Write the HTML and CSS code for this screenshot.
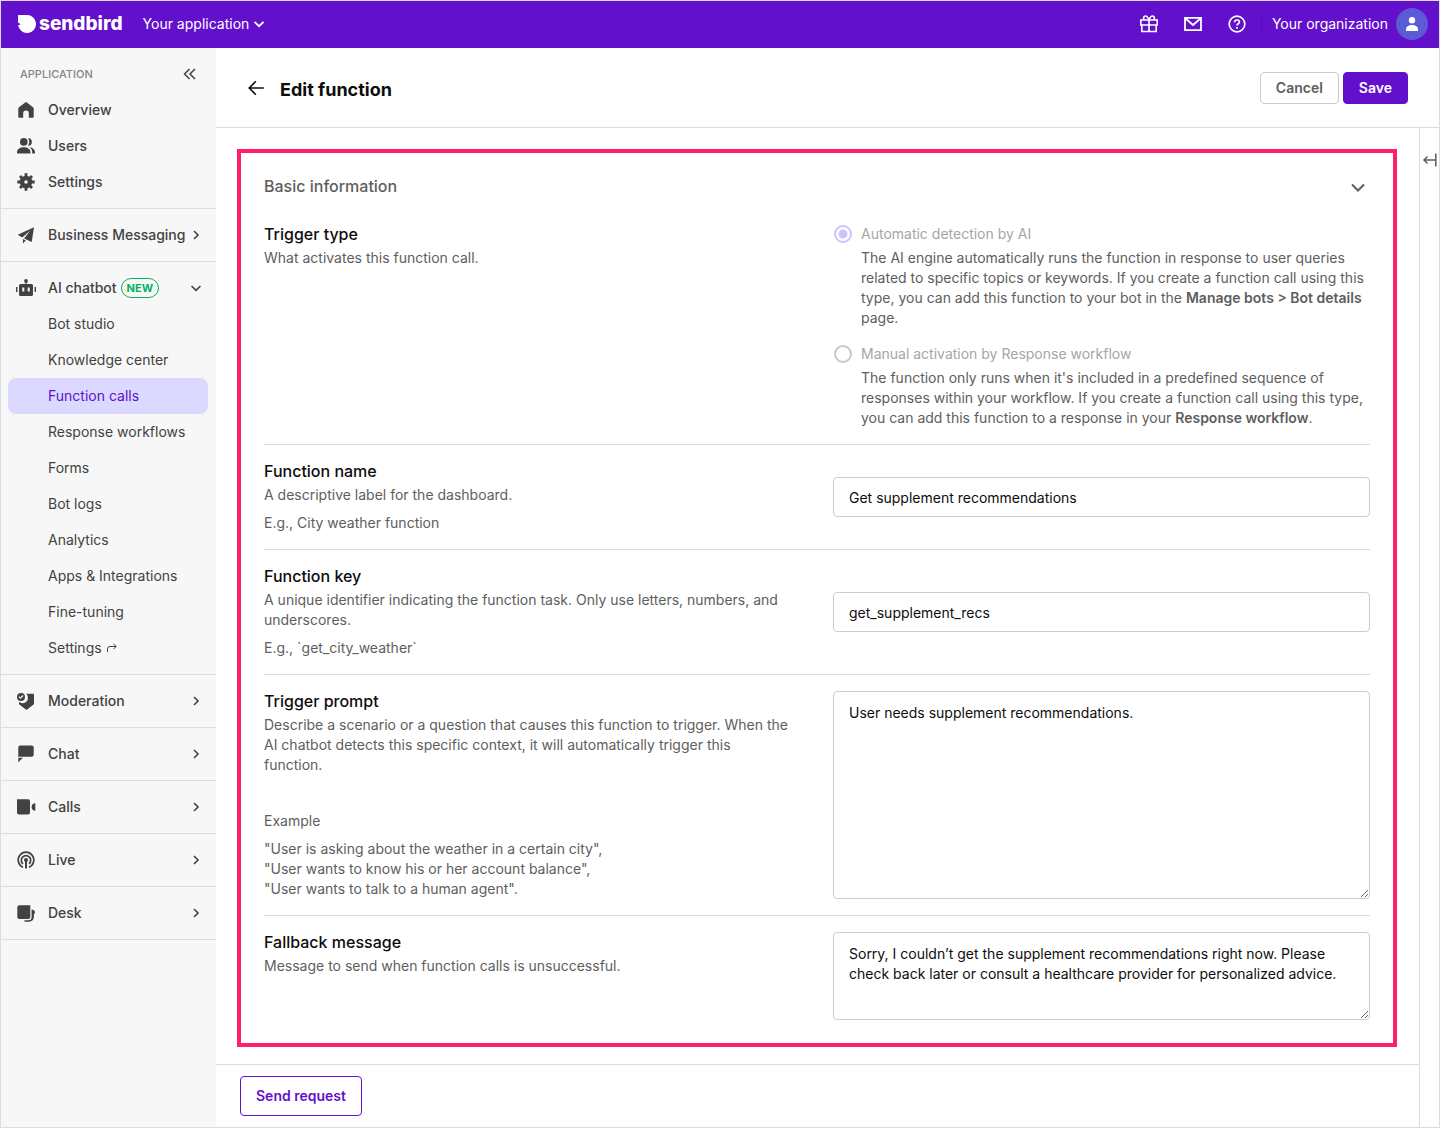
FILE: index.html
```html
<!doctype html>
<html lang="en">
<head>
<meta charset="utf-8" />
<title>Edit function | Sendbird Dashboard</title>
<meta name="viewport" content="width=device-width, initial-scale=1" />
<link rel="stylesheet" href="styles.css">
</head>
<body>
<!-- shared icons -->
<svg class="sprite" aria-hidden="true">
  <symbol id="chev-right" viewBox="0 0 16 16"><path d="M6 4l4 4-4 4" fill="none" stroke="currentColor" stroke-width="1.6"/></symbol>
  <symbol id="chev-down" viewBox="0 0 16 16"><path d="M3.5 6L8 10.4 12.5 6" fill="none" stroke="currentColor" stroke-width="1.6"/></symbol>
</svg>

<div class="app">
  <header class="topbar">
    <a class="logo" href="#">
      <svg width="18" height="18" viewBox="0 0 18 18" aria-hidden="true"><path fill="#fff" d="M0 0H9a9 9 0 1 1-8.9 10.3L2.8 9.2 0 7.4z"/></svg>
      <span>sendbird</span>
    </a>
    <button class="top-btn app-switch" type="button">Your application
      <svg width="16" height="16" viewBox="0 0 16 16" aria-hidden="true"><path d="M3.5 5.8L8 10.2l4.5-4.4" fill="none" stroke="currentColor" stroke-width="1.8"/></svg>
    </button>
    <div class="top-right">
      <button class="top-icon" type="button" aria-label="What's new">
        <svg width="20" height="20" viewBox="0 0 20 20" fill="none" stroke="currentColor" stroke-width="1.6"><path d="M1.8 6h16.4v5H1.8zM2.8 11v6.5h14.4V11M10 6v11.5M10 6C9 3 7.5 1.6 5.8 2.2 4 3 4.5 5 5.2 6M10 6c1-3 2.5-4.4 4.2-3.8C16 3 15.5 5 14.8 6"/></svg>
      </button>
      <button class="top-icon" type="button" aria-label="Messages">
        <svg width="20" height="20" viewBox="0 0 20 20" fill="none" stroke="currentColor" stroke-width="1.8"><path d="M2 3.9h16v12.2H2zM2.5 4.5L10 11l7.5-6.5"/></svg>
      </button>
      <button class="top-icon" type="button" aria-label="Help">
        <svg width="20" height="20" viewBox="0 0 20 20" fill="none" stroke="currentColor" stroke-width="1.7"><circle cx="10" cy="10" r="7.8"/><path d="M7.6 8.3c0-1.5 1-2.3 2.4-2.3s2.4.9 2.4 2.1c0 1.7-2.4 1.7-2.4 3.5M10 13v1.7"/></svg>
      </button>
      <button class="top-btn org" type="button">Your organization
        <span class="avatar"><svg width="16" height="16" viewBox="0 0 16 16" fill="#fff" aria-hidden="true"><circle cx="8" cy="4.2" r="3.2"/><path d="M2 15v-1.5C2 10.7 4.5 9 8 9s6 1.7 6 4.5V15z"/></svg></span>
      </button>
    </div>
  </header>

  <div class="layout">
    <nav class="sidebar" aria-label="Application">
      <div class="side-head">
        <span>APPLICATION</span>
        <button class="collapse" type="button" aria-label="Collapse menu">
          <svg width="16" height="16" viewBox="0 0 16 16" fill="none" stroke="currentColor" stroke-width="1.5"><path d="M7.5 3l-5 5 5 5M13 3L8 8l5 5"/></svg>
        </button>
      </div>

      <div class="side-group first">
        <a class="side-item" href="#">
          <svg class="ico" viewBox="0 0 20 20"><path d="M9.2 2.4a1.2 1.2 0 0 1 1.6 0l6.2 4.8q.7.6.7 1.4v8.2q0 .9-.9.9h-4v-4.5a2.8 2.8 0 0 0-5.6 0v4.5h-4q-.9 0-.9-.9V8.6q0-.8.7-1.4z"/></svg>
          Overview
        </a>
        <a class="side-item" href="#">
          <svg class="ico" viewBox="0 0 20 20"><circle cx="7.8" cy="5.9" r="3.8"/><path d="M1 17.6v-1.4c0-3 2.9-5 6.8-5s6.7 2 6.7 5v1.4zM12 2.2c2.2-.4 3.9 1.4 3.9 3.7s-1.7 4.1-3.9 3.7c1.7-2.2 1.7-5.2 0-7.4zM13.5 11.2c3.3.3 5.5 2.3 5.5 5.2v1.2h-2.8v-1.4c0-2.2-1-3.9-2.7-5z"/></svg>
          Users
        </a>
        <a class="side-item" href="#">
          <svg class="ico" viewBox="0 0 20 20"><path fill-rule="evenodd" d="M10 3.7a6.3 6.3 0 1 0 0 12.6 6.3 6.3 0 0 0 0-12.6zm0 4.5a1.8 1.8 0 1 1 0 3.6 1.8 1.8 0 0 1 0-3.6z"/><path d="M10 1.3v4M10 14.7v4M1.3 10h4M14.7 10h4M4 4l2.4 2.4M13.600 13.6L16 16M4 16l2.4-2.4M13.6 6.4L16 4" stroke="currentColor" stroke-width="2.8"/></svg>
          Settings
        </a>
      </div>

      <div class="side-group">
        <a class="side-item" href="#">
          <svg class="ico" viewBox="0 0 20 20"><path d="M18 2.2L1.7 9.8l4.6 2.6 8-6.8-6.2 7.9 7.6 3.6zM6.8 14l3 1.5L7 18.4z"/></svg>
          Business Messaging
          <svg class="chev" aria-hidden="true"><use href="#chev-right"/></svg>
        </a>
      </div>

      <div class="side-group">
        <a class="side-item" href="#">
          <svg class="ico" viewBox="0 0 20 20"><circle cx="10" cy="2.9" r="1.9"/><path d="M9.4 3h1.2v4H9.4zM0 9h1.4v5H0zM18.6 9H20v5h-1.4z"/><path fill-rule="evenodd" d="M4.5 6h11Q17 6 17 7.5v9q0 1.5-1.5 1.5h-11Q3 18 3 16.5v-9Q3 6 4.5 6zM6.3 9.5v4h2v-4zM11.7 9.5v4h2v-4z"/></svg>
          AI chatbot <span class="badge">NEW</span>
          <svg class="chev" aria-hidden="true"><use href="#chev-down"/></svg>
        </a>
        <a class="sub-item" href="#">Bot studio</a>
        <a class="sub-item" href="#">Knowledge center</a>
        <a class="sub-item active" href="#" aria-current="page">Function calls</a>
        <a class="sub-item" href="#">Response workflows</a>
        <a class="sub-item" href="#">Forms</a>
        <a class="sub-item" href="#">Bot logs</a>
        <a class="sub-item" href="#">Analytics</a>
        <a class="sub-item" href="#">Apps &amp; Integrations</a>
        <a class="sub-item" href="#">Fine-tuning</a>
        <a class="sub-item" href="#">Settings
          <svg width="12" height="12" viewBox="0 0 12 12" fill="none" stroke="currentColor" aria-hidden="true"><path d="M1.5 10V7q0-2.500 2.5-2.500h6M7.5 1.8l2.7 2.700-2.7 2.700"/></svg>
        </a>
      </div>

      <div class="side-group">
        <a class="side-item" href="#">
          <svg class="ico" viewBox="0 0 20 20"><path d="M10.2 2.8H17q1 0 1 1v8.6q0 .8-.7 1.3L10.5 19l-6.8-5.300q-.7-.5-.7-1.300v-1.6a5.2 5.2 0 0 0 7.200-8z"/><path fill-rule="evenodd" d="M5 2a4 4 0 1 1 0 8 4 4 0 0 1 0-8zM2.6 6l1.8 1.9 3.1-3-.8-.8-2.3 2.2-1-1z"/></svg>
          Moderation
          <svg class="chev" aria-hidden="true"><use href="#chev-right"/></svg>
        </a>
      </div>
      <div class="side-group">
        <a class="side-item" href="#">
          <svg class="ico" viewBox="0 0 20 20"><path d="M4.3 1.5h11.4q2 0 2 2v7.2q0 2-2 2H2.3V3.5q0-2 2-2zM2.3 13.8H7l-4.7 4.5z"/></svg>
          Chat
          <svg class="chev" aria-hidden="true"><use href="#chev-right"/></svg>
        </a>
      </div>
      <div class="side-group">
        <a class="side-item" href="#">
          <svg class="ico" viewBox="0 0 20 20"><path d="M1 2.2h11q2 0 2 2v11.4q0 2-2 2H3q-2 0-2-2zM19.3 6.2v7.6c-2.2 0-3.7-1.6-3.7-3.8s1.5-3.8 3.7-3.8z"/></svg>
          Calls
          <svg class="chev" aria-hidden="true"><use href="#chev-right"/></svg>
        </a>
      </div>
      <div class="side-group">
        <a class="side-item" href="#">
          <svg class="ico line" viewBox="0 0 20 20"><path d="M7 17.2a7.8 7.8 0 1 1 6 0M7 13.9a4.7 4.7 0 1 1 6 0"/><path d="M10 10v8.5" stroke-width="2"/><circle cx="10" cy="10" r="1.2"/></svg>
          Live
          <svg class="chev" aria-hidden="true"><use href="#chev-right"/></svg>
        </a>
      </div>
      <div class="side-group">
        <a class="side-item" href="#">
          <svg class="ico" viewBox="0 0 20 20"><path d="M3.3 2.2h11V14q0 2-2 2h-9q-2 0-2-2V4.2q0-2 2-2zM15.6 6.5c1.8 0 3.4 1.2 3.4 2.7 0 1-.6 1.5-1.1 1.7v2.6c0 3.3-1.7 5.2-5 5.2H8.5v-1.4h4c2.200 0 3.1-1.1 3.1-3.3z"/></svg>
          Desk
          <svg class="chev" aria-hidden="true"><use href="#chev-right"/></svg>
        </a>
      </div>
    </nav>

    <main class="page">
      <div class="page-head">
        <button class="back" type="button" aria-label="Back">
          <svg width="16" height="16" viewBox="0 0 16 16" fill="none" stroke="currentColor" stroke-width="1.6"><path d="M15.8 8H1.2M7.8 1.2L1.2 8l6.6 6.8"/></svg>
        </button>
        <h1>Edit function</h1>
        <div class="actions">
          <button class="btn" type="button">Cancel</button>
          <button class="btn primary" type="submit" form="fn-form">Save</button>
        </div>
      </div>

      <div class="page-body">
        <div class="content">
          <form class="panel" id="fn-form">
            <div class="panel-head">
              <h2>Basic information</h2>
              <button class="toggle" type="button" aria-label="Collapse section">
                <svg width="20" height="20" viewBox="0 0 20 20" fill="none" stroke="currentColor" stroke-width="2"><path d="M4 8.5l6 6 6-6"/></svg>
              </button>
            </div>

            <div class="row top">
              <div class="info">
                <h3 id="type-title">Trigger type</h3>
                <p>What activates this function call.</p>
              </div>
              <div class="radios" role="radiogroup" aria-labelledby="type-title">
                <div class="option">
                  <input type="radio" name="trigger" id="auto" checked disabled>
                  <div>
                    <label for="auto">Automatic detection by AI</label>
                    <p>The AI engine automatically runs the function in response to user queries related to specific topics or keywords. If you create a function call using this type, you can add this function to your bot in the <b>Manage bots &gt; Bot details</b> page.</p>
                  </div>
                </div>
                <div class="option">
                  <input type="radio" name="trigger" id="manual" disabled>
                  <div>
                    <label for="manual">Manual activation by Response workflow</label>
                    <p>The function only runs when it's included in a predefined sequence of responses within your workflow. If you create a function call using this type, you can add this function to a response in your <b>Response workflow</b>.</p>
                  </div>
                </div>
              </div>
            </div>

            <div class="row">
              <div class="info">
                <h3><label for="fn-name">Function name</label></h3>
                <p>A descriptive label for the dashboard.</p>
                <p class="eg">E.g., City weather function</p>
              </div>
              <input class="field" type="text" id="fn-name" value="Get supplement recommendations">
            </div>

            <div class="row">
              <div class="info">
                <h3><label for="fn-key">Function key</label></h3>
                <p>A unique identifier indicating the function task. Only use letters, numbers, and underscores.</p>
                <p class="eg">E.g., `get_city_weather`</p>
              </div>
              <input class="field" type="text" id="fn-key" value="get_supplement_recs">
            </div>

            <div class="row top">
              <div class="info">
                <h3><label for="fn-prompt">Trigger prompt</label></h3>
                <p>Describe a scenario or a question that causes this function to trigger. When the AI chatbot detects this specific context, it will automatically trigger this function.</p>
                <p class="example">Example</p>
                <p class="eg">"User is asking about the weather in a certain city",<br>"User wants to know his or her account balance",<br>"User wants to talk to a human agent".</p>
              </div>
              <textarea class="field tall" id="fn-prompt">User needs supplement recommendations.</textarea>
            </div>

            <div class="row top">
              <div class="info">
                <h3><label for="fn-fallback">Fallback message</label></h3>
                <p>Message to send when function calls is unsuccessful.</p>
              </div>
              <textarea class="field" id="fn-fallback">Sorry, I couldn’t get the supplement recommendations right now. Please check back later or consult a healthcare provider for personalized advice.</textarea>
            </div>
          </form>

          <div class="footer">
            <button class="btn outline" type="button">Send request</button>
          </div>
        </div>

        <aside class="rail">
          <button type="button" aria-label="Open side panel">
            <svg width="16" height="16" viewBox="0 0 16 16" fill="none" stroke="currentColor" stroke-width="1.5"><path d="M13.8 1.5v13M13.8 8H2M5.5 4.5L2 8l3.5 3.5"/></svg>
          </button>
        </aside>
      </div>
    </main>
  </div>
</div>
</body>
</html>
```
FILE: styles.css
```css
:root{
  --purple:#6210cc;
  --line:#dcdcdc;
  --ink:#0d0d0d;
  --ink-2:#5e5e5e;
  --side-ink:#424242;
}

*{margin:0;padding:0;box-sizing:border-box}
body{
  background:#fff;color:var(--ink);
  font:14px/20px Inter,sans-serif;
}
a{color:inherit;text-decoration:none}
button{font:inherit;color:inherit;background:none;border:0;cursor:pointer}
svg{display:block;flex:none}
.sprite{position:absolute;width:0;height:0}

.app{
  min-height:100vh;border:1px solid var(--line);
  display:flex;flex-direction:column;
}

/* === top bar === */
.topbar{
  height:47px;padding:0 11px 1px 17px;background:var(--purple);color:#fff;
  display:flex;align-items:center;
}
.logo{
  display:flex;align-items:center;gap:3px;
  font-size:19px;line-height:24px;font-weight:800;
}
.top-btn{display:flex;align-items:center}
.app-switch{margin-left:20px;gap:2px}
.top-right{margin-left:auto;display:flex;align-items:center;gap:24px}
.top-icon{width:20px;height:20px}
.org{
  height:20px;gap:8px;margin-left:-10px;padding-left:10px;
  border-left:1px solid #5510b3;
}
.avatar{
  width:32px;height:32px;border-radius:50%;background:#5b5bd6;
  display:flex;align-items:center;justify-content:center;
}

/* === sidebar === */
.layout{flex:1;display:flex}
.sidebar{width:215px;flex:none;background:#f7f7f7;color:var(--side-ink)}
.side-head{
  height:44px;padding:8px 18px 0 19px;
  display:flex;align-items:center;justify-content:space-between;
  font-size:11px;font-weight:500;color:#858585;
}
.collapse{color:var(--side-ink)}
.side-group{padding:8px 0;border-bottom:1px solid var(--line)}
.side-group.first{padding-top:0}
.side-item{
  height:36px;padding:0 12px 0 15px;
  display:flex;align-items:center;font-weight:500;
}
.ico{width:20px;height:20px;margin-right:12px;fill:currentColor}
.ico.line{fill:none;stroke:currentColor;stroke-width:1.7}
.chev{width:16px;height:16px;margin-left:auto}
.badge{
  margin-left:4px;padding:0 5px;border:1px solid #04b063;border-radius:10px;
  font-size:11px;line-height:18px;font-weight:700;color:#04b063;
}
.sub-item{
  height:36px;margin:0 8px 0 7px;padding-left:40px;border-radius:8px;
  display:flex;align-items:center;gap:4px;
}
.sub-item.active{background:#dbd9ff;color:var(--purple)}

/* === page === */
.page{flex:1;min-width:0;display:flex;flex-direction:column}
.page-head{
  height:80px;padding:0 31px 0 32px;border-bottom:1px solid var(--line);
  display:flex;align-items:center;
}
.back{margin-right:16px}
h1{padding-top:4px;font-size:18px;line-height:24px;font-weight:700}
.actions{margin-left:auto;display:flex;gap:4px}
.btn{
  height:32px;padding:0 15px;border:1px solid #ccc;border-radius:4px;
  font-weight:600;color:var(--ink-2);background:#fff;
}
.btn.primary{background:var(--purple);border-color:var(--purple);color:#fff}
.btn.outline{height:40px;border-color:var(--purple);color:var(--purple)}

.page-body{flex:1;display:flex}
.content{flex:1;min-width:0;display:flex;flex-direction:column}
.rail{width:20px;border-left:1px solid var(--line);padding-top:24px;color:var(--ink-2)}
.rail button{margin-left:2px}
.footer{margin-top:auto;padding:11px 24px;border-top:1px solid var(--line)}

/* === form panel === */
.panel{margin:21px 22px 17px 21px;padding:23px;border:4px solid #ff2066}
.panel-head{
  display:flex;align-items:center;justify-content:space-between;
  margin-bottom:12px;color:var(--ink-2);
}
h2{font-size:16px;line-height:20px;font-weight:500}
.toggle{margin-right:2px}
.row{
  display:grid;grid-template-columns:1fr 1fr;gap:32px;align-items:center;
  padding:16px 0;border-bottom:1px solid var(--line);
}
.row.top{align-items:start}
.row:last-child{border-bottom:0;padding-bottom:0}
.info{padding-right:12px}
h3{font-size:16px;line-height:20px;font-weight:500;margin-bottom:4px}
p{color:var(--ink-2)}
.eg{margin-top:8px}
.example{margin-top:36px}
b{font-weight:600}

.radios{display:grid;gap:16px}
.option{display:flex;gap:8px}
.option label{display:block;margin-bottom:4px;color:#a6a6a6}
.option input{
  appearance:none;flex:none;width:18px;height:18px;margin:1px;
  border:2px solid #c7c7c7;border-radius:50%;
}
.option input:checked{
  border-color:#c9c4ff;
  background:radial-gradient(circle,#c9c4ff 4px,#fff 5px);
}

.field{
  display:block;width:100%;height:40px;padding:0 15px;
  border:1px solid #ccc;border-radius:4px;background:#fff;
  font:inherit;color:var(--ink);
}
textarea.field{height:88px;padding:11px 15px;resize:vertical}
textarea.tall{height:208px}
```
